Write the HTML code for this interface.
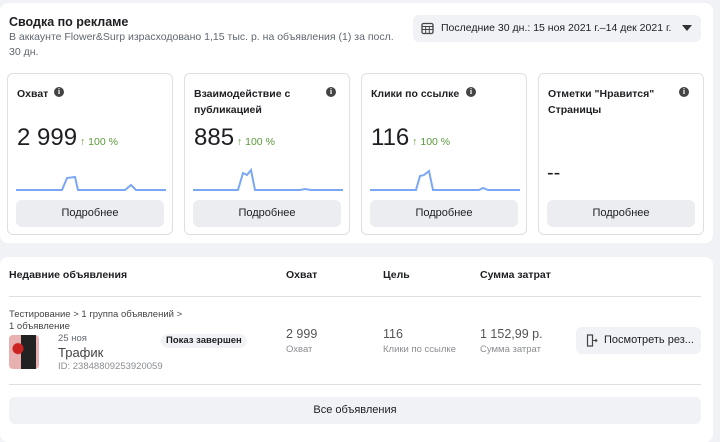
<!DOCTYPE html>
<html><head><meta charset="utf-8"><style>
*{box-sizing:border-box;margin:0;padding:0}
body{width:720px;height:436px;background:#f0f2f5;font-family:"Liberation Sans",sans-serif;color:#1c1e21;position:relative;overflow:hidden}
.a{position:absolute}
.card{background:#fff;border-radius:8px}
.mc{position:absolute;top:73px;width:166px;height:162px;border:1px solid #dddfe2;border-radius:6px;background:#fff}
.mt{position:absolute;left:9px;top:12px;font-size:10.5px;font-weight:bold;line-height:16px;width:120px}
.info{position:absolute;top:13px;width:10px;height:10px;border-radius:50%;background:#444;color:#fff;font-size:8px;font-weight:bold;text-align:center;line-height:10px;font-family:"Liberation Serif",serif}
.num{position:absolute;left:9px;top:50px;font-size:24px;line-height:28px;color:#1c1e21}
.pct{font-size:10.5px;color:#5b9a3c}
.btn{position:absolute;left:8px;top:126px;width:148px;height:27px;background:#ebedf0;border-radius:6px;font-size:11px;text-align:center;line-height:27px;color:#1c1e21}
svg.sp{position:absolute;left:8px;top:90px}
.g{color:#8a8d91}
</style></head><body>
<div class="a card" style="left:0;top:3px;width:713px;height:240px"></div>
<div class="a" style="left:9px;top:15px;font-size:12.5px;font-weight:bold">Сводка по рекламе</div>
<div class="a" style="left:9px;top:30px;font-size:10.5px;line-height:15px;color:#606770;width:390px">В аккаунте Flower&amp;Surp израсходовано 1,15 тыс. р. на объявления (1) за посл. 30 дн.</div>
<div class="a" style="left:413px;top:15px;width:288px;height:27px;background:#f0f2f5;border-radius:6px;font-size:10.5px;line-height:27px;padding-left:28px;color:#1c1e21">Последние 30 дн.: 15 ноя 2021 г.–14 дек 2021 г.</div>
<svg class="a" style="left:421px;top:22px" width="13" height="13" viewBox="0 0 13 13"><rect x="1" y="1.5" width="11" height="10" rx="1.5" fill="none" stroke="#444" stroke-width="1.3"/><path d="M1 4.5h11M1 7.5h11M4.7 4.5v7M8.3 4.5v7" stroke="#444" stroke-width="1"/></svg>
<svg class="a" style="left:682px;top:25px" width="10" height="6"><path d="M0 0h10L5 6z" fill="#333"/></svg>

<div class="mc" style="left:7px"><div class="mt">Охват</div><div class="info" style="left:46px">i</div>
<div class="num">2 999<span class="pct"> ↑ 100 %</span></div>
<svg class="sp" width="152" height="30"><polyline points="0,26 46,26 51,14 59,13 62,26 109,26 115,21 120,26 150,26" fill="none" stroke="#7ba7f5" stroke-width="2"/></svg>
<div class="btn">Подробнее</div></div>

<div class="mc" style="left:184px"><div class="mt">Взаимодействие с публикацией</div><div class="info" style="left:141px">i</div>
<div class="num">885<span class="pct"> ↑ 100 %</span></div>
<svg class="sp" width="152" height="30"><polyline points="0,26 45,26 50,9 54,11 58,6 62,26 107,26 112,25 118,26 150,26" fill="none" stroke="#7ba7f5" stroke-width="2"/></svg>
<div class="btn">Подробнее</div></div>

<div class="mc" style="left:361px"><div class="mt">Клики по ссылке</div><div class="info" style="left:104px">i</div>
<div class="num">116<span class="pct"> ↑ 100 %</span></div>
<svg class="sp" width="152" height="30"><polyline points="0,26 46,26 50,12 54,11 59,7 63,26 109,26 113,24 118,26 150,26" fill="none" stroke="#7ba7f5" stroke-width="2"/></svg>
<div class="btn">Подробнее</div></div>

<div class="mc" style="left:538px"><div class="mt">Отметки "Нравится" Страницы</div><div class="info" style="left:140px">i</div>
<div class="a" style="left:8px;top:88px;font-size:20px">--</div>
<div class="btn">Подробнее</div></div>

<div class="a card" style="left:0;top:257px;width:713px;height:185px"></div>
<div class="a" style="left:9px;top:269px;font-size:10.5px;font-weight:bold">Недавние объявления</div>
<div class="a" style="left:286px;top:269px;font-size:10.5px;font-weight:bold">Охват</div>
<div class="a" style="left:383px;top:269px;font-size:10.5px;font-weight:bold">Цель</div>
<div class="a" style="left:480px;top:269px;font-size:10.5px;font-weight:bold">Сумма затрат</div>
<div class="a" style="left:9px;top:296px;width:692px;height:1px;background:#dddfe2"></div>
<div class="a" style="left:9px;top:309px;font-size:9.5px;line-height:12px;color:#444">Тестирование &gt; 1 группа объявлений &gt;<br>1 объявление</div>
<div class="a" style="left:9px;top:335px;width:30px;height:34px;background:radial-gradient(circle at 30% 40%,#c22 0 5px,transparent 6px),linear-gradient(90deg,#e8b0b0 0 40%,#222 40% 90%,#e8b0b0 90%);border-radius:4px"></div>
<div class="a" style="left:58px;top:333px;font-size:9.5px;color:#606770">25 ноя</div>
<div class="a" style="left:58px;top:345px;font-size:13px;color:#444">Трафик</div>
<div class="a g" style="left:58px;top:361px;font-size:9.5px">ID: 23848809253920059</div>
<div class="a" style="left:161px;top:334px;padding:0 5px;height:14px;line-height:14px;background:#f0f2f5;border-radius:7px;font-size:9.5px;font-weight:bold">Показ завершен</div>
<div class="a" style="left:286px;top:327px;font-size:12.5px;color:#555">2 999</div>
<div class="a g" style="left:286px;top:344px;font-size:9.5px">Охват</div>
<div class="a" style="left:383px;top:327px;font-size:12.5px;color:#555">116</div>
<div class="a g" style="left:383px;top:344px;font-size:9.5px">Клики по ссылке</div>
<div class="a" style="left:480px;top:327px;font-size:12.5px;color:#555">1 152,99 р.</div>
<div class="a g" style="left:480px;top:344px;font-size:9.5px">Сумма затрат</div>
<div class="a" style="left:576px;top:327px;width:125px;height:27px;background:#f0f2f5;border-radius:6px;font-size:11px;line-height:27px;padding-left:28px">Посмотреть рез...</div>
<svg class="a" style="left:586px;top:334px" width="12" height="13"><path d="M1.5 1h5v11h-5z" fill="none" stroke="#444" stroke-width="1.2"/><path d="M7 6.5h4M9.5 5l1.5 1.5L9.5 8" fill="none" stroke="#444" stroke-width="1"/></svg>
<div class="a" style="left:9px;top:384px;width:692px;height:1px;background:#dddfe2"></div>
<div class="a" style="left:9px;top:397px;width:692px;height:27px;background:#f0f2f5;border-radius:6px;font-size:11px;line-height:27px;text-align:center">Все объявления</div>
</body></html>
